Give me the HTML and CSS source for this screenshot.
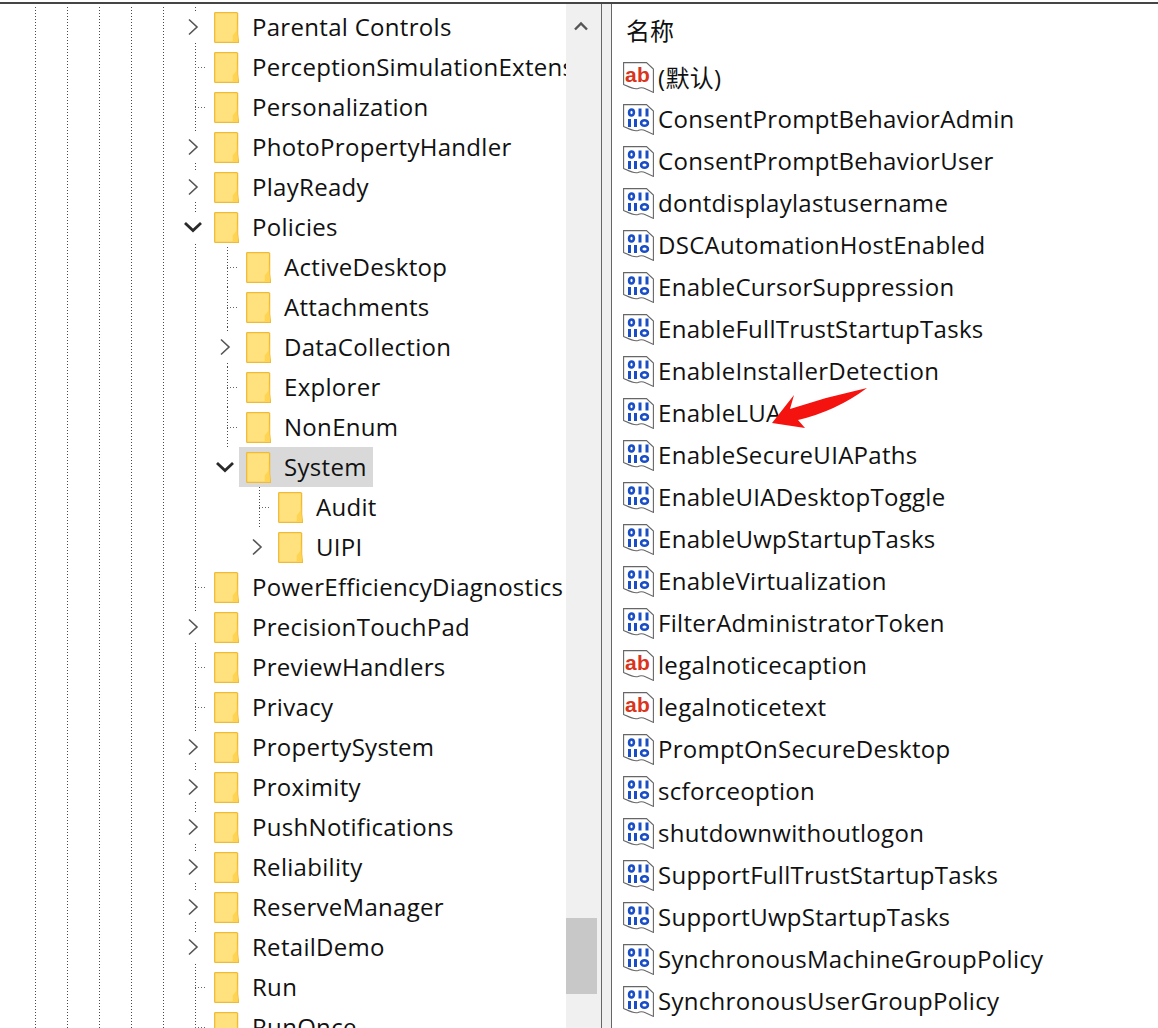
FILE: index.html
```html
<!DOCTYPE html>
<html lang="zh-CN">

<head>
    <meta charset="UTF-8">
    <meta name="viewport" content="width=device-width, initial-scale=1.0">
    <title>注册表编辑器</title>
    <link rel="stylesheet" href="styles.css">
</head>

<body>
    <svg class="defs" width="0" height="0">
        <symbol id="folder" viewBox="0 0 25 31">
            <path d="M.7 1.3Q.7.6 1.4.6H22.6L23.6 1.4V22L24.5 30.4H1.4Q.7 30.4.7 29.7Z" fill="#ffe27e" stroke="#efbb36" stroke-width="1.3" />
            <path d="M22.6 1.4V18.500L18.700 23.500V30H24.200L23.500 22Z" fill="#ffd354" />
        </symbol>
        <symbol id="right" viewBox="0 0 12 18">
            <path d="M2 1.500 10 9 2 16.500" fill="none" stroke="#555" stroke-width="1.600" />
        </symbol>
        <symbol id="down" viewBox="0 0 20 12">
            <path d="M2 2 10 9.500 18 2" fill="none" stroke="#2a2a2a" stroke-width="2.800" />
        </symbol>
        <symbol id="reg-bin" viewBox="0 0 31 31">
            <path d="M.6 .6H23.500L30.400 7V30.400L23 27C20 25.500 18 25 15 26.500C11 28 6 25 .6 22.500Z" fill="#fff" stroke="#666" stroke-width="1.100" />
            <g fill="none" stroke="#1a4ec4" stroke-width="2.600">
                <ellipse cx="8.500" cy="8.500" rx="2.400" ry="3" />
                <path d="M17 4.500V12.500M24 4.500V12.500M6.500 15V23M12.500 15V23" stroke-width="3" />
                <ellipse cx="21.500" cy="19" rx="3.400" ry="2.800" />
            </g>
        </symbol>
        <symbol id="reg-str" viewBox="0 0 31 31">
            <path d="M.6 .6H23.500L30.400 7V30.400L23 27C20 25.500 18 25 15 26.500C11 28 6 25 .6 22.500Z" fill="#fff" stroke="#666" stroke-width="1.100" />
            <text class="ab" x="14.500" y="19.500" text-anchor="middle">ab</text>
        </symbol>
    </svg>

    <div class="window">
        <div class="tree">
            <div class="row l0"><span class="slot"><svg class="chev"><use href="#right" /></svg></span><span class="item"><svg class="folder"><use href="#folder" /></svg><span>Parental Controls</span></span></div>
            <div class="row l0 leaf"><span class="slot"></span><span class="item"><svg class="folder"><use href="#folder" /></svg><span>PerceptionSimulationExtensions</span></span></div>
            <div class="row l0 leaf"><span class="slot"></span><span class="item"><svg class="folder"><use href="#folder" /></svg><span>Personalization</span></span></div>
            <div class="row l0"><span class="slot"><svg class="chev"><use href="#right" /></svg></span><span class="item"><svg class="folder"><use href="#folder" /></svg><span>PhotoPropertyHandler</span></span></div>
            <div class="row l0"><span class="slot"><svg class="chev"><use href="#right" /></svg></span><span class="item"><svg class="folder"><use href="#folder" /></svg><span>PlayReady</span></span></div>
            <div class="row l0"><span class="slot"><svg class="chev open"><use href="#down" /></svg></span><span class="item"><svg class="folder"><use href="#folder" /></svg><span>Policies</span></span></div>
            <div class="row l1 leaf"><span class="slot"></span><span class="item"><svg class="folder"><use href="#folder" /></svg><span>ActiveDesktop</span></span></div>
            <div class="row l1 leaf"><span class="slot"></span><span class="item"><svg class="folder"><use href="#folder" /></svg><span>Attachments</span></span></div>
            <div class="row l1"><span class="slot"><svg class="chev"><use href="#right" /></svg></span><span class="item"><svg class="folder"><use href="#folder" /></svg><span>DataCollection</span></span></div>
            <div class="row l1 leaf"><span class="slot"></span><span class="item"><svg class="folder"><use href="#folder" /></svg><span>Explorer</span></span></div>
            <div class="row l1 leaf"><span class="slot"></span><span class="item"><svg class="folder"><use href="#folder" /></svg><span>NonEnum</span></span></div>
            <div class="row l1 last"><span class="slot"><svg class="chev open"><use href="#down" /></svg></span><span class="item selected"><svg class="folder"><use href="#folder" /></svg><span>System</span></span></div>
            <div class="row l2 leaf"><span class="slot"></span><span class="item"><svg class="folder"><use href="#folder" /></svg><span>Audit</span></span></div>
            <div class="row l2 last"><span class="slot"><svg class="chev"><use href="#right" /></svg></span><span class="item"><svg class="folder"><use href="#folder" /></svg><span>UIPI</span></span></div>
            <div class="row l0 leaf"><span class="slot"></span><span class="item"><svg class="folder"><use href="#folder" /></svg><span>PowerEfficiencyDiagnostics</span></span></div>
            <div class="row l0"><span class="slot"><svg class="chev"><use href="#right" /></svg></span><span class="item"><svg class="folder"><use href="#folder" /></svg><span>PrecisionTouchPad</span></span></div>
            <div class="row l0 leaf"><span class="slot"></span><span class="item"><svg class="folder"><use href="#folder" /></svg><span>PreviewHandlers</span></span></div>
            <div class="row l0 leaf"><span class="slot"></span><span class="item"><svg class="folder"><use href="#folder" /></svg><span>Privacy</span></span></div>
            <div class="row l0"><span class="slot"><svg class="chev"><use href="#right" /></svg></span><span class="item"><svg class="folder"><use href="#folder" /></svg><span>PropertySystem</span></span></div>
            <div class="row l0"><span class="slot"><svg class="chev"><use href="#right" /></svg></span><span class="item"><svg class="folder"><use href="#folder" /></svg><span>Proximity</span></span></div>
            <div class="row l0"><span class="slot"><svg class="chev"><use href="#right" /></svg></span><span class="item"><svg class="folder"><use href="#folder" /></svg><span>PushNotifications</span></span></div>
            <div class="row l0"><span class="slot"><svg class="chev"><use href="#right" /></svg></span><span class="item"><svg class="folder"><use href="#folder" /></svg><span>Reliability</span></span></div>
            <div class="row l0"><span class="slot"><svg class="chev"><use href="#right" /></svg></span><span class="item"><svg class="folder"><use href="#folder" /></svg><span>ReserveManager</span></span></div>
            <div class="row l0"><span class="slot"><svg class="chev"><use href="#right" /></svg></span><span class="item"><svg class="folder"><use href="#folder" /></svg><span>RetailDemo</span></span></div>
            <div class="row l0 leaf"><span class="slot"></span><span class="item"><svg class="folder"><use href="#folder" /></svg><span>Run</span></span></div>
            <div class="row l0 leaf"><span class="slot"></span><span class="item"><svg class="folder"><use href="#folder" /></svg><span>RunOnce</span></span></div>
        </div>

        <div class="scrollbar">
            <svg class="up" viewBox="0 0 16 10"><path d="M2 8.500 8 2.500 14 8.500" fill="none" stroke="#555" stroke-width="2.400" /></svg>
            <div class="thumb"></div>
        </div>
        <div class="gutter"></div>

        <div class="values">
            <div class="header">名称</div>
            <div class="value"><svg class="reg"><use href="#reg-str" /></svg><span>(默认)</span></div>
            <div class="value"><svg class="reg"><use href="#reg-bin" /></svg><span>ConsentPromptBehaviorAdmin</span></div>
            <div class="value"><svg class="reg"><use href="#reg-bin" /></svg><span>ConsentPromptBehaviorUser</span></div>
            <div class="value"><svg class="reg"><use href="#reg-bin" /></svg><span>dontdisplaylastusername</span></div>
            <div class="value"><svg class="reg"><use href="#reg-bin" /></svg><span>DSCAutomationHostEnabled</span></div>
            <div class="value"><svg class="reg"><use href="#reg-bin" /></svg><span>EnableCursorSuppression</span></div>
            <div class="value"><svg class="reg"><use href="#reg-bin" /></svg><span>EnableFullTrustStartupTasks</span></div>
            <div class="value"><svg class="reg"><use href="#reg-bin" /></svg><span>EnableInstallerDetection</span></div>
            <div class="value"><svg class="reg"><use href="#reg-bin" /></svg><span>EnableLUA</span></div>
            <div class="value"><svg class="reg"><use href="#reg-bin" /></svg><span>EnableSecureUIAPaths</span></div>
            <div class="value"><svg class="reg"><use href="#reg-bin" /></svg><span>EnableUIADesktopToggle</span></div>
            <div class="value"><svg class="reg"><use href="#reg-bin" /></svg><span>EnableUwpStartupTasks</span></div>
            <div class="value"><svg class="reg"><use href="#reg-bin" /></svg><span>EnableVirtualization</span></div>
            <div class="value"><svg class="reg"><use href="#reg-bin" /></svg><span>FilterAdministratorToken</span></div>
            <div class="value"><svg class="reg"><use href="#reg-str" /></svg><span>legalnoticecaption</span></div>
            <div class="value"><svg class="reg"><use href="#reg-str" /></svg><span>legalnoticetext</span></div>
            <div class="value"><svg class="reg"><use href="#reg-bin" /></svg><span>PromptOnSecureDesktop</span></div>
            <div class="value"><svg class="reg"><use href="#reg-bin" /></svg><span>scforceoption</span></div>
            <div class="value"><svg class="reg"><use href="#reg-bin" /></svg><span>shutdownwithoutlogon</span></div>
            <div class="value"><svg class="reg"><use href="#reg-bin" /></svg><span>SupportFullTrustStartupTasks</span></div>
            <div class="value"><svg class="reg"><use href="#reg-bin" /></svg><span>SupportUwpStartupTasks</span></div>
            <div class="value"><svg class="reg"><use href="#reg-bin" /></svg><span>SynchronousMachineGroupPolicy</span></div>
            <div class="value"><svg class="reg"><use href="#reg-bin" /></svg><span>SynchronousUserGroupPolicy</span></div>
            <div class="value"><svg class="reg"><use href="#reg-bin" /></svg></div>
        </div>
    </div>

    <!-- 红色箭头 -->
    <svg class="arrow" viewBox="0 0 110 50">
        <path d="M101 4 L60 14 L24 25 L28 11 L6 39 L39 44 L32 36 Q70 27 101 4Z" fill="#f5130f" />
    </svg>
</body>

</html>
```

FILE: styles.css
```css
* {
    margin: 0;
    padding: 0;
    box-sizing: border-box;
}

html,
body {
    height: 1028px;
    overflow: hidden;
    background: #fff;
}

body {
    position: relative;
    padding-top: 2px;
    font-family: "Open Sans", "Noto Sans CJK SC", sans-serif;
    font-size: 24px;
    letter-spacing: .3px;
    color: #111;
}

.defs {
    position: absolute;
}

.window {
    display: flex;
    height: 1026px;
    border-top: 2px solid #454545;
}

/* 左侧树 */
.tree {
    --dots: repeating-linear-gradient(to bottom, #4a4a4a 0 1px, transparent 1px 3px);
    width: 566px;
    flex: none;
    padding-top: 3px;
    overflow: hidden;
    background-image: var(--dots), var(--dots), var(--dots), var(--dots), var(--dots), var(--dots);
    background-size: 1px 100%;
    background-repeat: no-repeat;
    background-position: 35px 3px, 67px 3px, 99px 3px, 131px 3px, 163px 3px, 195px 3px;
}

.row {
    --stub: repeating-linear-gradient(to right, #666 0 1px, transparent 1px 3px);
    display: flex;
    align-items: center;
    height: 40px;
    white-space: nowrap;
}

.l0 {
    padding-left: 179px;
}

.l1 {
    padding-left: 211px;
}

.l2 {
    padding-left: 243px;
}

.l1:not(.last) {
    background: var(--dots) 227px 0 / 1px 100% no-repeat;
}

.l2:not(.last) {
    background: var(--dots) 259px 0 / 1px 100% no-repeat;
}

.slot {
    display: flex;
    align-items: center;
    justify-content: center;
    flex: none;
    width: 28px;
    height: 30px;
    background: #fff;
}

.leaf .slot {
    height: 1px;
    background: var(--stub) 16px 0 / 12px 1px no-repeat;
}

.chev {
    width: 12px;
    height: 18px;
}

.chev.open {
    width: 20px;
    height: 12px;
}

.item {
    display: flex;
    align-items: center;
    gap: 13px;
    height: 40px;
    padding: 0 7px;
}

.item span {
    padding-bottom: 2px;
}

.item.selected {
    padding-right: 6px;
    background: #d9d9d9;
}

.folder {
    flex: none;
    width: 25px;
    height: 31px;
}

/* 滚动条 */
.scrollbar {
    flex: none;
    width: 36px;
    background: #f0f0f0;
    border-right: 1px solid #666;
}

.up {
    display: block;
    width: 16px;
    height: 10px;
    margin: 17px 0 0 7px;
}

.thumb {
    width: 31px;
    height: 76px;
    margin-top: 887px;
    background: #c8c8c8;
}

.gutter {
    flex: none;
    width: 10px;
    background: #f0f0f0;
    border-right: 1px solid #666;
}

/* 右侧列表 */
.values {
    flex: 1;
    padding: 3px 0 0 11px;
    overflow: hidden;
}

.header {
    height: 49px;
    padding-left: 3px;
    line-height: 47px;
    letter-spacing: 0;
}

.value {
    display: flex;
    align-items: center;
    gap: 4px;
    height: 42px;
    white-space: nowrap;
}

.value span {
    padding-bottom: 2px;
}

.reg {
    flex: none;
    width: 31px;
    height: 31px;
}

.ab {
    font: bold 21px "Liberation Sans", sans-serif;
    fill: #d9341c;
}

.arrow {
    position: absolute;
    left: 766px;
    top: 384px;
    width: 110px;
    height: 50px;
}
```
